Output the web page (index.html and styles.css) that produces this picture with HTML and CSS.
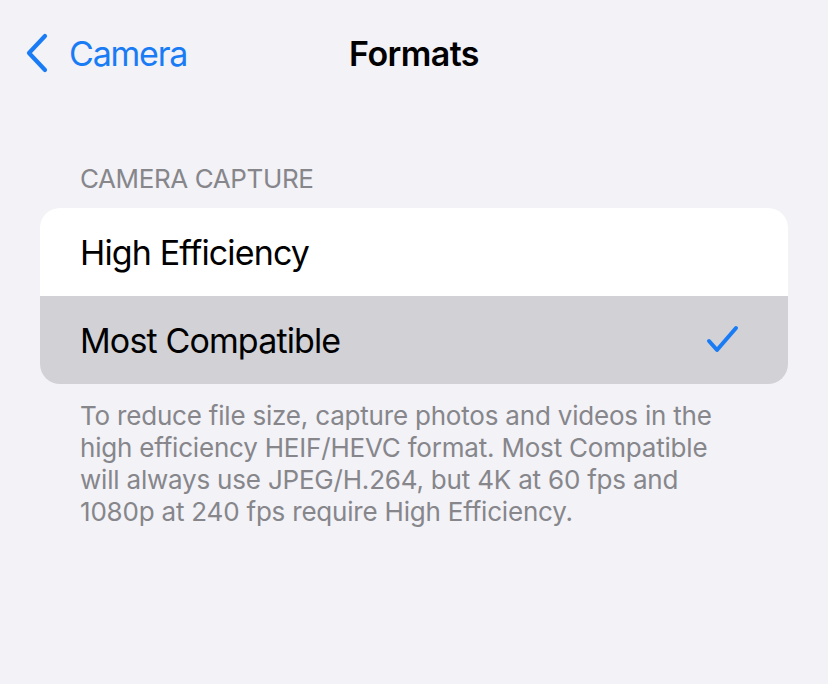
FILE: index.html
```html
<!DOCTYPE html>
<html>
<head>
<meta charset="utf-8">
<link rel="stylesheet" href="styles.css">
</head>
<body>
<div class="screen">
  <header class="nav">
    <div class="back">
      <svg class="chev" width="24" height="40" viewBox="0 0 24 40"><path d="M20 3 L4 20 L20 37" fill="none" stroke="#1a7cf5" stroke-width="4.2" stroke-linecap="round" stroke-linejoin="round"/></svg>
      <span class="back-label">Camera</span>
    </div>
    <div class="title">Formats</div>
  </header>
  <section class="group">
    <div class="group-header">CAMERA CAPTURE</div>
    <div class="card">
      <div class="row">High Efficiency</div>
      <div class="row selected">
        <span>Most Compatible</span>
        <svg class="check" width="34" height="34" viewBox="0 0 34 34"><path d="M3 18 L11 27 L30 5" fill="none" stroke="#1a7cf5" stroke-width="4" stroke-linecap="round" stroke-linejoin="round"/></svg>
      </div>
    </div>
    <p class="footer">To reduce file size, capture photos and videos in the high efficiency HEIF/HEVC format. Most Compatible will always use JPEG/H.264, but 4K at 60 fps and 1080p at 240 fps require High Efficiency.</p>
  </section>
</div>
</body>
</html>
```
FILE: styles.css
```css
html, body {
  margin: 0;
  padding: 0;
  background: #f2f2f7;
}
.screen {
  width: 828px;
  height: 684px;
  font-family: Inter, "Noto Sans", sans-serif;
  color: #000;
  overflow: hidden;
}
.nav {
  position: relative;
  height: 106px;
  display: flex;
  align-items: center;
}
.back {
  display: flex;
  align-items: center;
  padding-left: 25px;
  gap: 20px;
}
.back-label {
  color: #1a7cf5;
  font-size: 34px;
  letter-spacing: -1.2px;
}
.title {
  position: absolute;
  left: 0;
  right: 0;
  top: 0;
  height: 106px;
  display: flex;
  align-items: center;
  justify-content: center;
  font-size: 34px;
  font-weight: 600;
  letter-spacing: -0.6px;
}
.group {
  padding: 58px 40px 0;
}
.group-header {
  padding-left: 40px;
  font-size: 26px;
  color: #86868b;
  letter-spacing: -0.4px;
  line-height: 30px;
  margin-bottom: 14px;
}
.card {
  border-radius: 20px;
  overflow: hidden;
  background: #fff;
}
.row {
  height: 88px;
  display: flex;
  align-items: center;
  justify-content: space-between;
  padding: 0 48px 0 40px;
  font-size: 34px;
  letter-spacing: -0.86px;
}
.row.selected {
  background: #d1d1d6;
}
.footer {
  margin: 16px 0 0;
  padding: 0 40px 0 40px;
  font-size: 26px;
  line-height: 32px;
  letter-spacing: -0.2px;
  color: #86868b;
}
```
